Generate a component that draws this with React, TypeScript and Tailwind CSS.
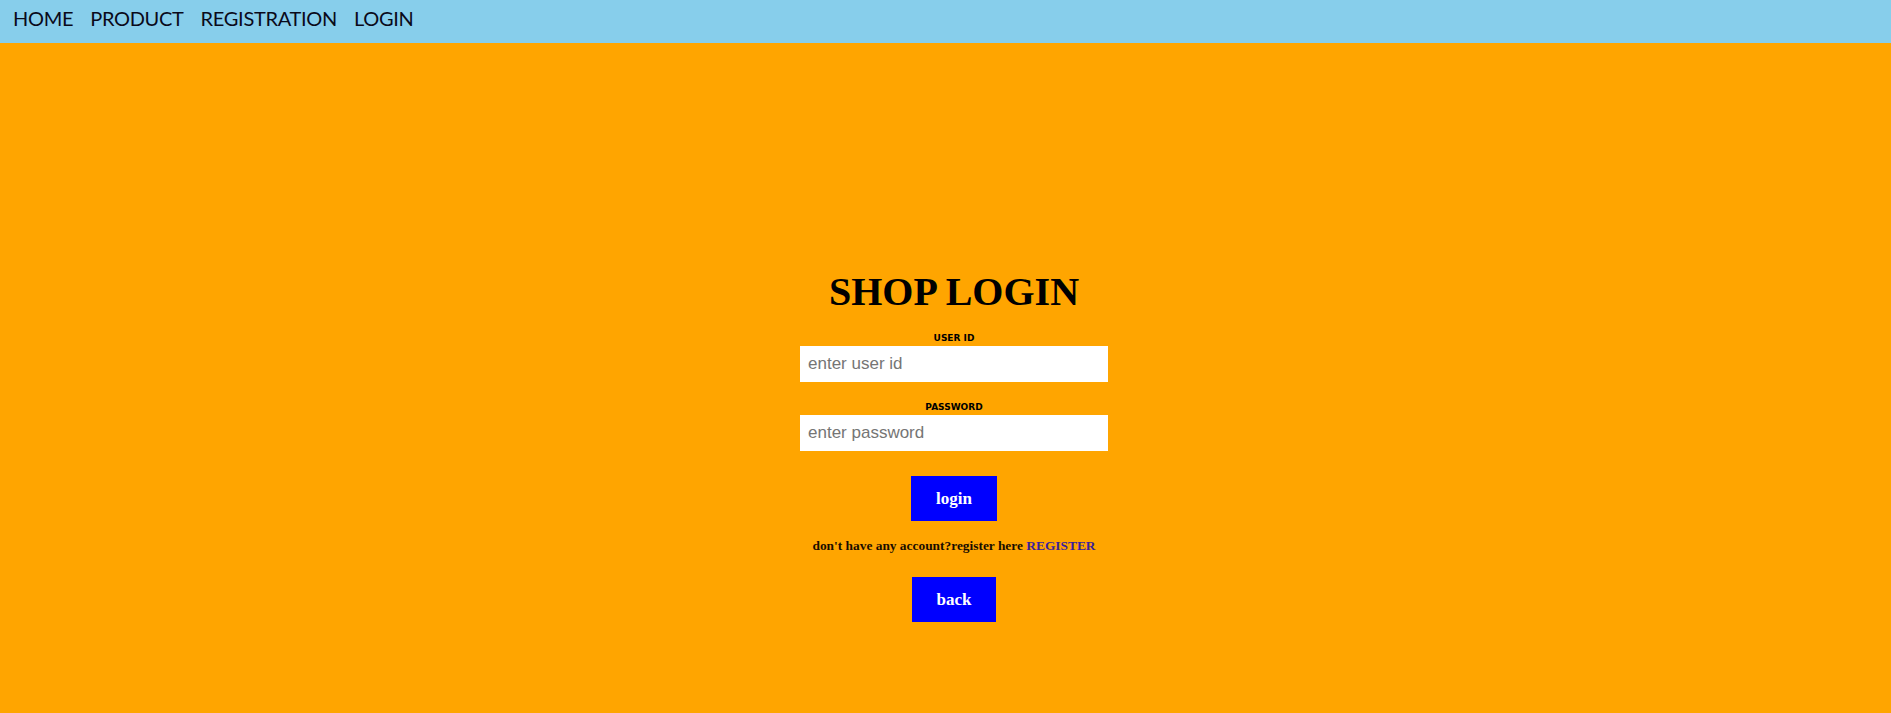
export default function App() {
    const navItems = ["HOME", "PRODUCT", "REGISTRATION", "LOGIN"];

    return (
        <div className="min-h-[713px] w-full flex flex-col bg-[#ffa500]">
            <nav className="h-[43px] bg-[#87ceeb] flex items-start pt-[8px] pl-[13px] gap-[17px]">
                {navItems.map((item) => (
                    <a
                        key={item}
                        className="text-[20px] leading-[20px] text-[#0a0a1a] cursor-pointer font-['Lato',sans-serif] tracking-[-0.3px]"
                    >
                        {item}
                    </a>
                ))}
            </nav>

            <div className="flex flex-col items-center pt-[226px] pl-[17px]">
                <h1 className="font-['Liberation_Serif',serif] font-bold text-[40px] leading-[46px] text-black">
                    SHOP LOGIN
                </h1>

                <label className="mt-[18px] font-['DejaVu_Sans',sans-serif] font-bold text-[9px] leading-[10px] text-black">
                    USER ID
                </label>
                <input
                    className="mt-[3px] w-[308px] h-[36px] bg-white px-[8px] text-[17px] font-['Liberation_Sans',sans-serif] outline-none placeholder:text-[#757575]"
                    placeholder="enter user id"
                />

                <label className="mt-[20px] font-['DejaVu_Sans',sans-serif] font-bold text-[9px] leading-[10px] text-black">
                    PASSWORD
                </label>
                <input
                    type="password"
                    className="mt-[3px] w-[308px] h-[36px] bg-white px-[8px] text-[17px] font-['Liberation_Sans',sans-serif] outline-none placeholder:text-[#757575]"
                    placeholder="enter password"
                />

                <button className="mt-[25px] w-[86px] h-[45px] bg-[#0000ff] text-white font-['Liberation_Serif',serif] font-bold text-[17px]">
                    login
                </button>

                <p className="mt-[17px] font-['Liberation_Serif',serif] font-bold text-[13.4px] leading-[16px] text-[#1a0d00]">
                    don't have any account?register here{" "}
                    <a className="text-[#3b1f9a] cursor-pointer">REGISTER</a>
                </p>

                <button className="mt-[23px] w-[84px] h-[45px] bg-[#0000ff] text-white font-['Liberation_Serif',serif] font-bold text-[17px]">
                    back
                </button>
            </div>
        </div>
    );
}
